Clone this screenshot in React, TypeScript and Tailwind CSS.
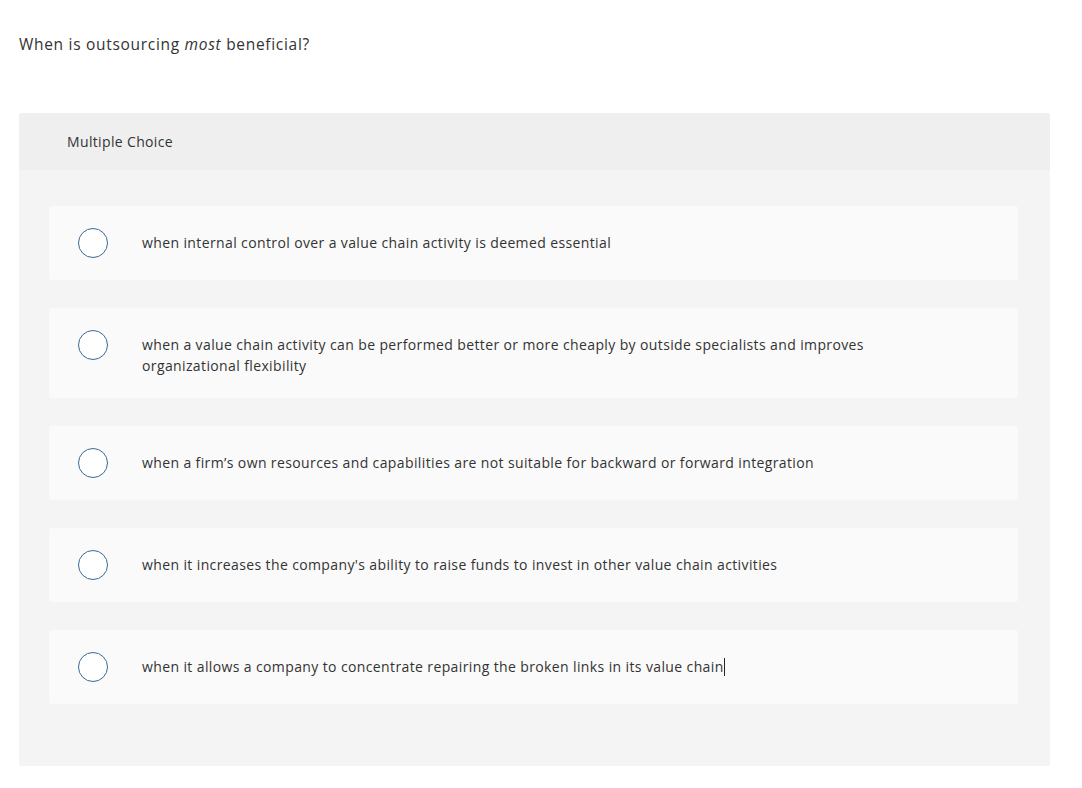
import React from 'react';

const options = [
  'when internal control over a value chain activity is deemed essential',
  'when a value chain activity can be performed better or more cheaply by outside specialists and improves organizational flexibility',
  'when a firm\u2019s own resources and capabilities are not suitable for backward or forward integration',
  "when it increases the company's ability to raise funds to invest in other value chain activities",
  'when it allows a company to concentrate repairing the broken links in its value chain',
];

function Radio() {
  return <div className="w-[30px] h-[30px] shrink-0 rounded-full border border-[#3b6895] bg-white" />;
}

export default function App() {
  return (
    <div className="min-h-screen bg-white pl-[19px] pr-[32px] text-[#333] [font-family:'Open_Sans','Liberation_Sans',sans-serif] [font-variant-ligatures:none]">
      <p className="pt-[33px] text-[15.5px] leading-[22px] tracking-[0.7px]">
        When is outsourcing <em>most</em> beneficial?
      </p>

      <div className="mt-[58px] rounded-[3px] bg-[#f4f4f4]">
        <div className="h-[57px] rounded-t-[3px] bg-[#efefef] pl-[48px] flex items-center text-[14px] tracking-[0.35px]">
          Multiple Choice
        </div>

        <div className="pl-[30px] pr-[32px] pt-[36px] pb-[62px] flex flex-col gap-[28px]">
          {options.map((o, i) => (
            <div key={i} className="rounded-[3px] bg-[#fafafa] py-[22px] pl-[29px] pr-[120px] flex items-start gap-[34px]">
              <Radio />
              <p className="mt-[4px] text-[14px] leading-[21px] tracking-[0.38px]">
                {o}
                {i === options.length - 1 && (
                  <span className="inline-block w-px h-[18px] bg-[#222] align-middle -mt-[2px]" />
                )}
              </p>
            </div>
          ))}
        </div>
      </div>
    </div>
  );
}
